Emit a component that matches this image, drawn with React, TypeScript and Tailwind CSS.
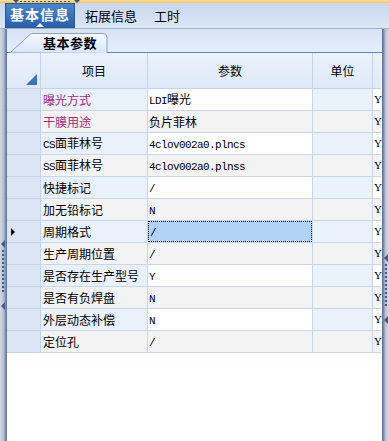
import React from 'react';

const cjk = '"Noto Sans CJK SC", "Liberation Sans", sans-serif';

const rows = [
  { name: '曝光方式', value: 'LDI曝光', pink: true },
  { name: '干膜用途', value: '负片菲林', pink: true },
  { name: 'CS面菲林号', value: '4clov002a0.plncs' },
  { name: 'SS面菲林号', value: '4clov002a0.plnss' },
  { name: '快捷标记', value: '/' },
  { name: '加无铅标记', value: 'N' },
  { name: '周期格式', value: '/', current: true },
  { name: '生产周期位置', value: '/' },
  { name: '是否存在生产型号', value: 'Y' },
  { name: '是否有负焊盘', value: 'N' },
  { name: '外层动态补偿', value: 'N' },
  { name: '定位孔', value: '/' },
];

// ascii runs get the narrow mono face, the rest stays CJK
function MixedText({ text }: { text: string }) {
  const parts = text.split(/([\x00-\x7f]+)/).filter((p) => p.length > 0);
  return (
    <span className="whitespace-nowrap">
      {parts.map((p, i) =>
        /^[\x00-\x7f]+$/.test(p) ? (
          <span key={i} className="font-['Liberation_Mono',monospace] text-[11px] tracking-[-0.6px]">
            {p}
          </span>
        ) : (
          <span key={i}>{p}</span>
        )
      )}
    </span>
  );
}

function SplitterGrip({ side }: { side: 'left' | 'right' }) {
  const top = side === 'left' ? 'top-[211px]' : 'top-[225px]';
  const arrowX = side === 'left' ? 'left-[1px]' : 'left-[2px]';
  return (
    <div className={`absolute ${top} ${arrowX} flex flex-col items-center`}>
      <div className="w-0 h-0 border-y-[4px] border-y-transparent border-r-[4px] border-r-[#3d5b8c]" />
      <div className="mt-[2px] h-[44px] w-[2px] bg-[repeating-linear-gradient(to_bottom,#3d5b8c_0_2px,transparent_2px_4px)]" />
      <div className="mt-[8px] w-0 h-0 border-y-[4px] border-y-transparent border-r-[4px] border-r-[#3d5b8c]" />
    </div>
  );
}

export default function App() {
  return (
    <div className="w-[389px] h-[441px] flex flex-col overflow-hidden bg-white" style={{ fontFamily: cjk }}>
      {/* top splitter strip */}
      <div className="relative h-[3px] bg-gradient-to-b from-[#fde09a] to-[#f6c25c]">
        <div className="absolute left-[13px] top-0 w-0 h-0 border-x-[3px] border-x-transparent border-t-[3px] border-t-[#3d4f6e]" />
        <div className="absolute left-[20px] top-[1px] w-[52px] h-px bg-[repeating-linear-gradient(to_right,#3d4f6e_0_2px,transparent_2px_4px)]" />
        <div className="absolute left-[74px] top-0 w-0 h-0 border-x-[3px] border-x-transparent border-t-[3px] border-t-[#3d4f6e]" />
      </div>

      {/* main tabs */}
      <div className="h-[25px] flex items-stretch pl-[5px] bg-gradient-to-b from-[#c7d7ee] to-[#dce7f6]">
        <div className="relative w-[70px] flex items-center justify-center pb-[2px] bg-gradient-to-b from-[#4a86d2] to-[#2a60ad] border border-[#2b5796] text-white text-[14px] font-bold tracking-[1px]">
          基本信息
          <div className="absolute bottom-0 left-[30px] w-0 h-0 border-x-[4px] border-x-transparent border-b-[4px] border-b-white" />
        </div>
        <div className="w-[72px] flex items-center justify-center text-[13px] text-black">拓展信息</div>
        <div className="w-[40px] flex items-center justify-center text-[13px] text-black">工时</div>
      </div>
      <div className="h-px bg-[#a3b1c4]" />

      <div className="flex-1 flex min-h-0">
        {/* left splitter */}
        <div className="relative w-[7px] bg-gradient-to-r from-[#d2d9e3] via-[#b4c0d1] to-[#5a6f93]">
          <SplitterGrip side="left" />
        </div>

        <div className="flex-1 flex flex-col min-w-0">
          {/* sub tab strip */}
          <div className="relative h-[23px] bg-gradient-to-b from-[#d6e3f6] to-[#e6eefb]">
            <div className="absolute left-[3px] top-[4px] w-[98px] h-[20px]">
              <svg width="98" height="20" className="absolute inset-0">
                <defs>
                  <linearGradient id="subtab" x1="0" y1="0" x2="0" y2="1">
                    <stop offset="0" stopColor="#f7faff" />
                    <stop offset="1" stopColor="#d7e4f8" />
                  </linearGradient>
                </defs>
                <path d="M0.5 19.5 L20 1.5 Q21 0.5 23 0.5 L93 0.5 Q97 0.5 97 4.5 L97 20" fill="url(#subtab)" stroke="#8fa2c0" />
              </svg>
              <div className="relative h-full flex items-center pl-[33px] text-[13px] font-bold text-black tracking-[0.5px]">基本参数</div>
            </div>
          </div>

          {/* grid */}
          <div className="grid grid-cols-[34px_107px_165px_60px_8px] border-t border-[#5f83c2] text-[12px] text-black">
            <div className="relative h-[36px] bg-gradient-to-b from-[#eaf1fb] to-[#dfe9f7] border-r border-b border-[#c3d3ea]">
              <div className="absolute right-[3px] bottom-[3px] w-0 h-0 border-l-[11px] border-l-transparent border-b-[11px] border-b-[#3b73c4]" />
            </div>
            <div className="h-[36px] flex items-center justify-center bg-gradient-to-b from-[#eaf1fb] to-[#dfe9f7] border-r border-b border-[#c3d3ea]">项目</div>
            <div className="h-[36px] flex items-center justify-center bg-gradient-to-b from-[#eaf1fb] to-[#dfe9f7] border-r border-b border-[#c3d3ea]">参数</div>
            <div className="h-[36px] flex items-center justify-center bg-gradient-to-b from-[#eaf1fb] to-[#dfe9f7] border-r border-b border-[#c3d3ea]">单位</div>
            <div className="h-[36px] bg-gradient-to-b from-[#eaf1fb] to-[#dfe9f7] border-b border-[#c3d3ea]" />

            {rows.map((r, i) => {
              const even = i % 2 === 0;
              const side = even ? 'bg-[#e9f1fb]' : 'bg-[#f3f3f3]';
              const mid = even ? 'bg-white' : 'bg-[#f3f3f3]';
              return (
                <React.Fragment key={r.name}>
                  <div className="relative h-[22px] bg-[#dbe5f4] border-r border-b border-[#c3d3ea]">
                    {r.current && (
                      <div className="absolute left-[4px] top-[7px] w-0 h-0 border-y-[4px] border-y-transparent border-l-[4px] border-l-black" />
                    )}
                  </div>
                  <div className={`h-[22px] flex items-center pl-[2px] border-r border-b border-[#c8d6ea] ${side} ${r.pink ? 'text-[#a8287f]' : ''}`}>
                    <MixedText text={r.name} />
                  </div>
                  <div className={`h-[22px] border-r border-b border-[#c8d6ea] ${r.current ? 'bg-white' : mid}`}>
                    <div className={`h-full flex items-center pl-[1px] ${r.current ? 'bg-[#b3d3f6] border border-dotted border-black' : ''}`}>
                      <MixedText text={r.value} />
                    </div>
                  </div>
                  <div className={`h-[22px] border-r border-b border-[#c8d6ea] ${side}`} />
                  <div className={`h-[22px] flex items-center pl-[1px] border-b border-[#c8d6ea] ${mid} font-['Liberation_Serif',serif] text-[11px]`}>Y</div>
                </React.Fragment>
              );
            })}
          </div>
          <div className="flex-1 bg-white" />
        </div>

        {/* right splitter */}
        <div className="relative w-[7px] bg-gradient-to-r from-[#4f6589] via-[#b8c3d3] to-[#d6dce5]">
          <SplitterGrip side="right" />
        </div>
      </div>
    </div>
  );
}
